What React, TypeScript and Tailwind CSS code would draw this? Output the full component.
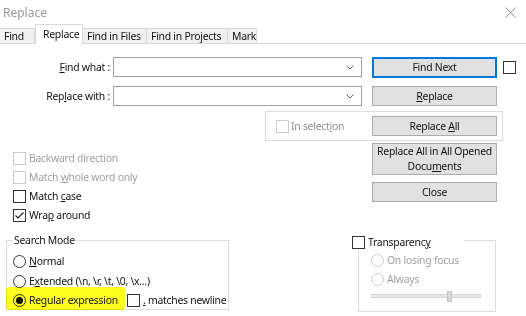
import React from "react";

function cn(...parts: (string | false | undefined)[]) {
  return parts.filter(Boolean).join(" ");
}

function Box({
  checked,
  disabled,
  className,
}: {
  checked?: boolean;
  disabled?: boolean;
  className?: string;
}) {
  return (
    <span
      className={cn(
        "inline-flex h-[13px] w-[13px] shrink-0 items-center justify-center border bg-white",
        disabled ? "border-[#cccccc]" : "border-[#333333]",
        className
      )}
    >
      {checked && (
        <svg width="11" height="11" viewBox="0 0 11 11" fill="none">
          <path d="M1.5 5.5 L4 8 L9.5 2.5" stroke="#222" strokeWidth="1.2" />
        </svg>
      )}
    </span>
  );
}

function Radio({ selected, disabled }: { selected?: boolean; disabled?: boolean }) {
  return (
    <span
      className={cn(
        "inline-flex h-[13px] w-[13px] shrink-0 items-center justify-center rounded-full border bg-white",
        disabled ? "border-[#cccccc]" : "border-[#333333]"
      )}
    >
      {selected && <span className="h-[7px] w-[7px] rounded-full bg-[#111]" />}
    </span>
  );
}

function Button({
  children,
  primary,
  className,
}: {
  children: React.ReactNode;
  primary?: boolean;
  className?: string;
}) {
  return (
    <div
      className={cn(
        "flex w-[125px] items-center justify-center bg-[#e1e1e1] text-center leading-[15px]",
        primary ? "border-2 border-[#0078d7]" : "border border-[#adadad]",
        className
      )}
    >
      {children}
    </div>
  );
}

function Combo({ className }: { className?: string }) {
  return (
    <div
      className={cn(
        "flex h-[20px] w-[249px] items-center justify-end border border-[#a0a0a0] bg-white pr-[7px]",
        className
      )}
    >
      <svg width="8" height="5" viewBox="0 0 8 5" fill="none">
        <path d="M0.5 0.5 L4 4 L7.5 0.5" stroke="#666" strokeWidth="1" />
      </svg>
    </div>
  );
}

function CheckRow({
  children,
  checked,
  disabled,
}: {
  children: React.ReactNode;
  checked?: boolean;
  disabled?: boolean;
}) {
  return (
    <div className="flex h-[19px] items-center">
      <Box checked={checked} disabled={disabled} />
      <span className={cn("ml-[3px]", disabled && "text-[#a0a0a0]")}>{children}</span>
    </div>
  );
}

const tabs = [
  { label: "Find", w: "w-[35px]", pl: "pl-[4px]" },
  { label: "Replace", w: "w-[48px]", pl: "pl-[7px]", active: true },
  { label: "Find in Files", w: "w-[64px]", pl: "pl-[4px]" },
  { label: "Find in Projects", w: "w-[81px]", pl: "pl-[4px]" },
  { label: "Mark", w: "w-[29px]", pl: "pl-[4px]" },
];

export default function App() {
  return (
    <div className="relative h-[316px] w-[526px] overflow-hidden whitespace-nowrap bg-white font-['Noto_Sans',sans-serif] text-[10.4px] leading-[15px] tracking-[-0.25px] text-[#111]">
      {/* title bar */}
      <div className="flex h-[25px] items-center justify-between pl-[3px] pr-[10px]">
        <span className="text-[12px] tracking-normal text-[#9a9a9a]">Replace</span>
        <svg width="11" height="11" viewBox="0 0 11 11" fill="none">
          <path d="M0.5 0.5 L10.5 10.5 M10.5 0.5 L0.5 10.5" stroke="#999" strokeWidth="1" />
        </svg>
      </div>

      {/* tabs */}
      <div className="flex h-[19px] items-end border-b border-[#d9d9d9]">
        {tabs.map((t) =>
          t.active ? (
            <div
              key={t.label}
              className={cn(
                "-mb-px flex h-[20px] items-center border-x border-t border-[#d9d9d9] bg-white",
                t.w,
                t.pl
              )}
            >
              {t.label}
            </div>
          ) : (
            <div
              key={t.label}
              className={cn(
                "flex h-[15px] items-center border-r border-t border-[#d9d9d9] bg-[#f0f0f0]",
                t.w,
                t.pl
              )}
            >
              {t.label}
            </div>
          )
        )}
      </div>

      {/* find / replace rows */}
      <div className="mt-[13px] flex h-[20px] items-center">
        <span className="w-[111px] pr-[1px] text-right">
          <span className="underline">F</span>ind what :
        </span>
        <Combo className="ml-[2px]" />
        <Button primary className="ml-[10px] h-[21px]">
          Find Next
        </Button>
        <Box className="ml-[6px]" />
      </div>
      <div className="mt-[9px] flex h-[20px] items-center">
        <span className="w-[111px] pr-[1px] text-right">
          Rep<span className="underline">l</span>ace with :
        </span>
        <Combo className="ml-[2px]" />
        <Button className="ml-[10px] h-[20px]">
          <span>
            <span className="underline">R</span>eplace
          </span>
        </Button>
      </div>

      {/* in selection group */}
      <div className="ml-[265px] mt-[5px] flex h-[30px] w-[238px] items-center border border-[#dcdcdc]">
        <div className="flex w-[106px] items-center pl-[10px]">
          <Box disabled />
          <span className="ml-[2px] text-[#8d8d8d]">
            In select<span className="underline">i</span>on
          </span>
        </div>
        <Button className="h-[20px]">
          <span>
            Replace <span className="underline">A</span>ll
          </span>
        </Button>
      </div>

      {/* options + side buttons */}
      <div className="flex">
        <div className="w-[372px] pl-[13px] pt-[8px]">
          <CheckRow disabled>Backward direction</CheckRow>
          <CheckRow disabled>
            Match <span className="underline">w</span>hole word only
          </CheckRow>
          <CheckRow>
            Match <span className="underline">c</span>ase
          </CheckRow>
          <CheckRow checked>
            Wra<span className="underline">p</span> around
          </CheckRow>
        </div>
        <div className="pt-[2px]">
          <Button className="h-[32px]">
            <span>
              Replace All in All Opened
              <br />
              Docu<span className="underline">m</span>ents
            </span>
          </Button>
          <Button className="mt-[7px] h-[20px]">Close</Button>
        </div>
      </div>

      {/* bottom groups */}
      <div className="mt-[15px] flex items-start">
        <div className="relative ml-[6px] h-[70px] w-[223px] border border-[#dcdcdc]">
          <span className="absolute left-[6px] top-[-8px] bg-white px-px">Search Mode</span>
          <div className="overflow-hidden pl-[6px] pt-[10px]">
            <div className="flex h-[20px] items-center">
              <Radio />
              <span className="ml-[3px]">
                <span className="underline">N</span>ormal
              </span>
            </div>
            <div className="flex h-[20px] items-center">
              <Radio />
              <span className="ml-[3px]">
                E<span className="underline">x</span>tended (\n, \r, \t, \0, \x...)
              </span>
            </div>
            <div className="flex h-[19px] items-center">
              <div className="flex w-[114px] items-center">
                <Radio selected />
                <span className="ml-[3px]">Regular expression</span>
              </div>
              <Box />
              <span className="ml-[3px]">
                <span className="underline">.</span> matches newline
              </span>
            </div>
          </div>
        </div>

        <div className="relative ml-[129px] h-[72px] w-[138px] border border-[#dcdcdc]">
          <div className="absolute left-[-7px] top-[-7px] flex h-[16px] w-[112px] items-center bg-white">
            <Box />
            <span className="ml-[3px]">
              Transparenc<span className="underline">y</span>
            </span>
          </div>
          <div className="pl-[12px] pt-[10px] text-[#a0a0a0]">
            <div className="flex h-[19px] items-center">
              <Radio disabled />
              <span className="ml-[3px]">On losing focus</span>
            </div>
            <div className="flex h-[19px] items-center">
              <Radio disabled />
              <span className="ml-[3px]">Always</span>
            </div>
            <div className="relative flex h-[14px] items-center">
              <div className="h-[4px] w-[110px] border border-[#d6d6d6] bg-[#e7e7e7]" />
              <div className="absolute left-[76px] top-[2px] h-[11px] w-[5px] border border-[#c4c4c4] bg-[#d9d9d9]" />
            </div>
          </div>
        </div>
      </div>

      {/* highlighter mark */}
      <div className="pointer-events-none absolute left-[6px] top-[287px] h-[23px] w-[119px] rounded-[3px] bg-[#ffff1f] mix-blend-multiply" />
    </div>
  );
}
